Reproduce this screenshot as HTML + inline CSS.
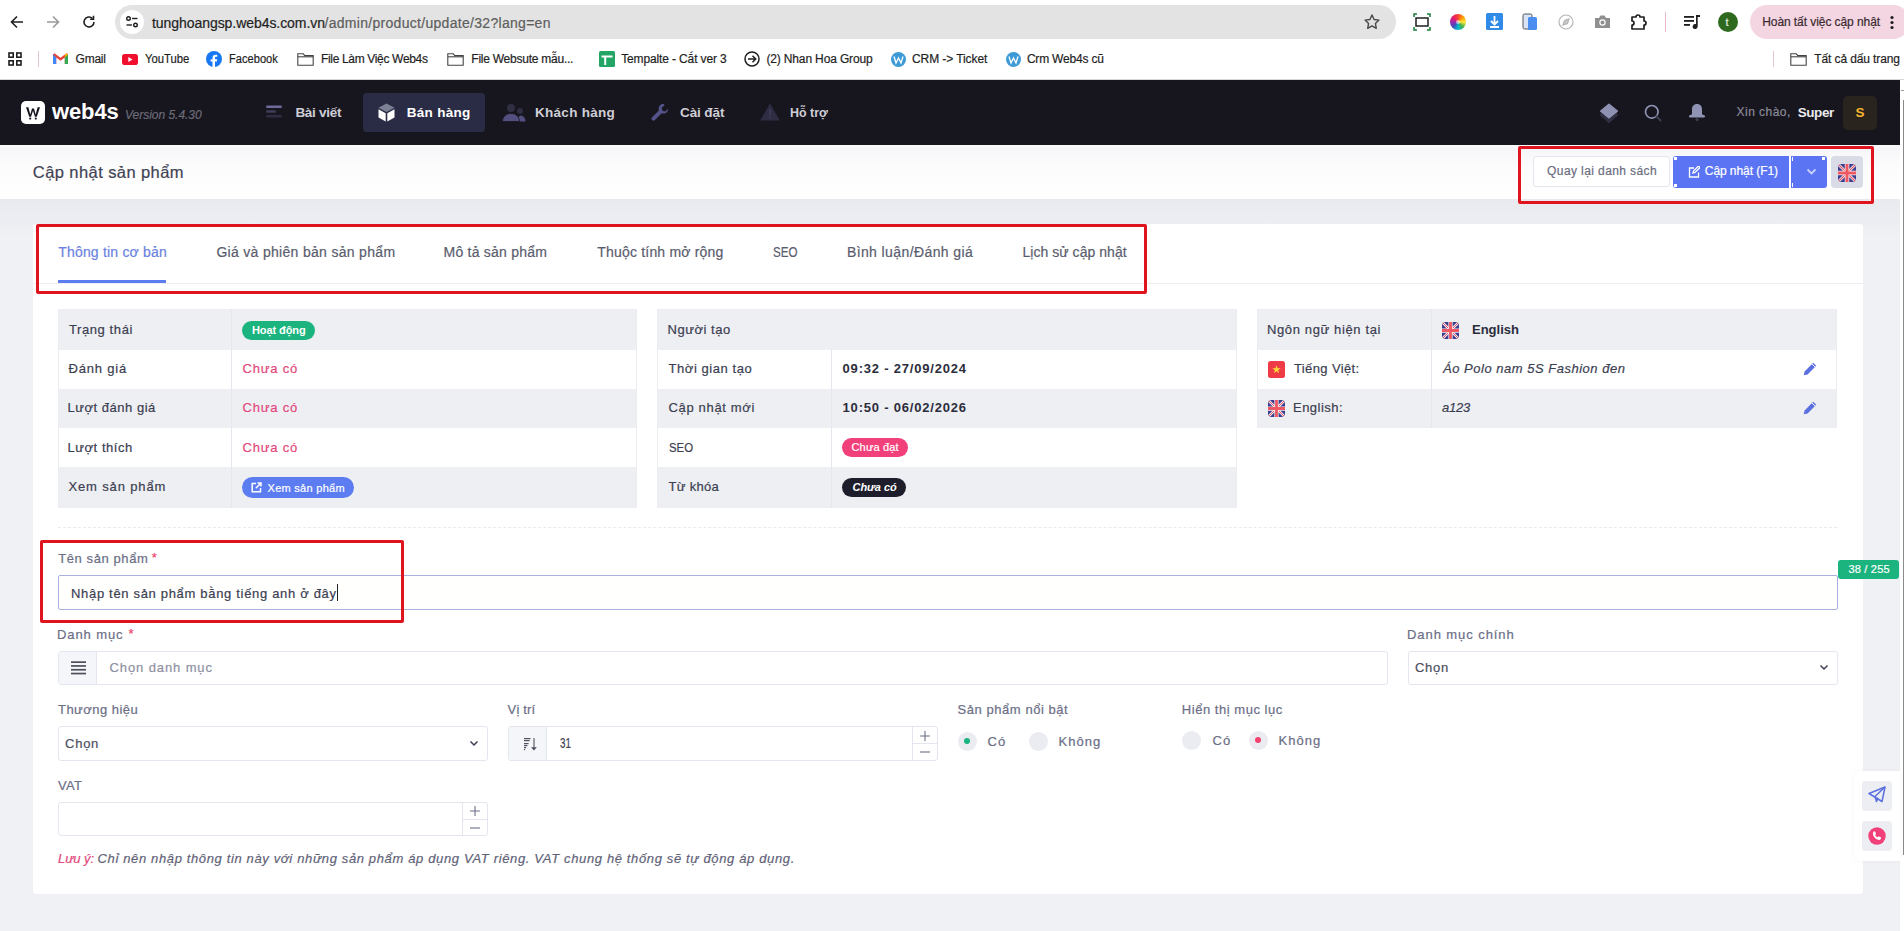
<!DOCTYPE html>
<html><head><meta charset="utf-8"><style>
html,body{margin:0;padding:0;width:1904px;height:931px;overflow:hidden;background:#f0f1f5;font-family:"Liberation Sans",sans-serif;}
body>div,body>span,body>svg{position:absolute;box-sizing:border-box;}
.t{white-space:nowrap;line-height:1;}
</style></head><body>
<div style="left:0px;top:0px;width:1904px;height:80px;background:#ffffff;"></div>
<div style="left:0px;top:79px;width:1904px;height:1px;background:#d6d6d6;"></div>
<div style="left:115px;top:5px;width:1281px;height:34px;background:#e3e3e3;border-radius:17px;"></div>
<div style="left:120px;top:10px;width:24px;height:24px;background:#ffffff;border-radius:12px;"></div>
<svg style="left:124px;top:14px" width="16" height="16" viewBox="0 0 16 16" fill="none" stroke="#1f1f1f" stroke-width="1.4"><circle cx="4.5" cy="4.5" r="1.8"/><path d="M8 4.5h5.5"/><circle cx="11.5" cy="11" r="1.8"/><path d="M2.5 11H8"/></svg>
<svg style="left:9px;top:14px" width="16" height="16" viewBox="0 0 16 16" fill="none" stroke="#1f1f1f" stroke-width="1.6"><path d="M14 8H3M8 2.5L2.5 8 8 13.5"/></svg>
<svg style="left:45px;top:14px" width="16" height="16" viewBox="0 0 16 16" fill="none" stroke="#9a9a9a" stroke-width="1.6"><path d="M2 8h11M8 2.5L13.5 8 8 13.5"/></svg>
<svg style="left:81px;top:14px" width="16" height="16" viewBox="0 0 16 16" fill="none" stroke="#1f1f1f" stroke-width="1.6"><path d="M13 8a5 5 0 1 1-1.6-3.7"/><path d="M12.5 1.8v3.4H9.1" /></svg>
<svg style="left:1363px;top:13px" width="18" height="18" viewBox="0 0 18 18" fill="none" stroke="#474747" stroke-width="1.4" stroke-linejoin="round"><path d="M9 2l2.1 4.5 4.9.6-3.6 3.3.9 4.9L9 12.9l-4.3 2.4.9-4.9L2 7.1l4.9-.6z"/></svg>
<svg style="left:1413px;top:13px" width="18" height="18" viewBox="0 0 18 18" fill="none" stroke="#1f1f1f" stroke-width="1.5"><rect x="3" y="5" width="12" height="8"/><path d="M1 4V1h3M14 1h3v3M17 14v3h-3M4 17H1v-3" stroke="#188038"/></svg>
<div style="left:1450px;top:14px;width:16px;height:16px;background:conic-gradient(#f44336,#ff9800,#ffeb3b,#4caf50,#00bcd4,#3f51b5,#9c27b0,#e91e63,#f44336);border-radius:50%;"></div>
<div style="left:1456px;top:20px;width:4px;height:4px;background:#ffffff;border-radius:50%;opacity:.6;"></div>
<svg style="left:1486px;top:13px" width="17" height="17" viewBox="0 0 17 17"><rect width="17" height="17" rx="1.5" fill="#2f8ae8"/><path d="M8.5 3v8M5 8l3.5 3.5L12 8M4 14h9" stroke="#fff" stroke-width="1.8" fill="none"/></svg>
<svg style="left:1522px;top:12px" width="16" height="19" viewBox="0 0 16 19"><rect x="1" y="2" width="9" height="15" rx="1.5" fill="#d8e4f6" stroke="#555" stroke-width="1"/><rect x="6" y="5" width="9" height="13" rx="1.5" fill="#4b8cf0"/></svg>
<svg style="left:1558px;top:14px" width="16" height="16" viewBox="0 0 16 16" fill="none" stroke="#b5b5b5" stroke-width="1.2"><circle cx="8" cy="8" r="7"/><path d="M5 11l1.5-4.5L11 5 9.5 9.5z" fill="#c8c8c8"/></svg>
<svg style="left:1594px;top:14px" width="17" height="15" viewBox="0 0 17 15"><path d="M1 4h4l1.5-2.5h4L12 4h4v10H1z" fill="#8f8f8f"/><circle cx="8.5" cy="8.5" r="3.2" fill="#fff"/><circle cx="8.5" cy="8.5" r="2" fill="#8f8f8f"/></svg>
<svg style="left:1630px;top:12px" width="18" height="19" viewBox="0 0 18 19" fill="none" stroke="#1f1f1f" stroke-width="1.7" stroke-linejoin="round"><path d="M2 5h4a2 2 0 0 1 4 0h4v4a2 2 0 0 1 0 4v4H2v-4a2 2 0 0 0 0-4z"/></svg>
<div style="left:1665px;top:12px;width:1px;height:20px;background:#e9b9c4;"></div>
<svg style="left:1683px;top:14px" width="18" height="16" viewBox="0 0 18 16" fill="#1f1f1f"><rect x="1" y="2" width="10" height="1.8"/><rect x="1" y="6" width="10" height="1.8"/><rect x="1" y="10" width="6" height="1.8"/><path d="M13 1h4v2h-2.3v9.5a2.5 2.5 0 1 1-1.7-2.4z"/></svg>
<div style="left:1718px;top:12px;width:20px;height:20px;background:#2d6a1e;border-radius:50%;"></div>
<div style="left:1750px;top:5px;width:160px;height:34px;background:#f4d6e2;border-radius:17px;"></div>
<svg style="left:1889px;top:15px" width="6" height="16" viewBox="0 0 6 16" fill="#1f1f1f"><circle cx="3" cy="2.5" r="1.6"/><circle cx="3" cy="7.5" r="1.6"/><circle cx="3" cy="12.5" r="1.6"/></svg>
<svg style="left:8px;top:52px" width="14" height="14" viewBox="0 0 14 14" fill="none" stroke="#1f1f1f" stroke-width="1.6"><rect x="1" y="1" width="4.2" height="4.2"/><rect x="8.8" y="1" width="4.2" height="4.2"/><rect x="1" y="8.8" width="4.2" height="4.2"/><rect x="8.8" y="8.8" width="4.2" height="4.2"/></svg>
<div style="left:38px;top:51px;width:1px;height:16px;background:#e5c8cf;"></div>
<svg style="left:53px;top:53px" width="15" height="11" viewBox="0 0 15 11"><path d="M0 1.2V11h3.2V4.5L7.5 7.8 11.8 4.5V11H15V1.2L13.6.2 7.5 4.8 1.4.2z" fill="#ea4335"/><path d="M0 1.2V11h3.2V4.5z" fill="#4285f4"/><path d="M11.8 4.5V11H15V1.2z" fill="#34a853"/><path d="M13.6.2L15 1.2 11.8 4.5V2z" fill="#fbbc04"/></svg>
<svg style="left:122px;top:54px" width="16" height="11" viewBox="0 0 16 11"><rect width="16" height="11" rx="2.8" fill="#f00f2c"/><path d="M6.3 3v5l4.2-2.5z" fill="#fff"/></svg>
<svg style="left:206px;top:51px" width="16" height="16" viewBox="0 0 16 16"><circle cx="8" cy="8" r="8" fill="#1877f2"/><path d="M9 16v-5.5h1.9l.3-2.2H9V6.9c0-.6.2-1.1 1.1-1.1h1.2V3.9c-.2 0-1-.1-1.8-.1-1.8 0-3 1.1-3 3.1v1.5H4.6v2.2h1.9V16z" fill="#fff"/></svg>
<svg style="left:297px;top:53px" width="17" height="13" viewBox="0 0 17 13" fill="none" stroke="#444" stroke-width="1.1"><path d="M.8.8h5.5l1.5 1.8h8.4v9.6H.8z"/><path d="M.8 3.8h15.4"/></svg>
<svg style="left:447px;top:53px" width="17" height="13" viewBox="0 0 17 13" fill="none" stroke="#444" stroke-width="1.1"><path d="M.8.8h5.5l1.5 1.8h8.4v9.6H.8z"/><path d="M.8 3.8h15.4"/></svg>
<svg style="left:599px;top:51px" width="16" height="16" viewBox="0 0 16 16"><rect width="16" height="16" rx="1.5" fill="#23a566"/><path d="M2.5 4.5h11v2H7.2V14H5.2V6.5H2.5z" fill="#fff"/></svg>
<svg style="left:744px;top:51px" width="16" height="16" viewBox="0 0 16 16" fill="none" stroke="#1f1f1f" stroke-width="1.5"><circle cx="8" cy="8" r="7"/><path d="M4 8h7.5M8.5 4.8L11.7 8 8.5 11.2"/></svg>
<svg style="left:891px;top:52px" width="15" height="15" viewBox="0 0 15 15"><circle cx="7.5" cy="7.5" r="7.5" fill="#3d9ad6"/><path d="M3 4.5l2 6.5 2.5-5 2.5 5 2-6.5" stroke="#fff" stroke-width="1.3" fill="none"/></svg>
<svg style="left:1006px;top:52px" width="15" height="15" viewBox="0 0 15 15"><circle cx="7.5" cy="7.5" r="7.5" fill="#3d9ad6"/><path d="M3 4.5l2 6.5 2.5-5 2.5 5 2-6.5" stroke="#fff" stroke-width="1.3" fill="none"/></svg>
<div style="left:1773px;top:51px;width:1px;height:16px;background:#e5c8cf;"></div>
<svg style="left:1790px;top:53px" width="17" height="13" viewBox="0 0 17 13" fill="none" stroke="#444" stroke-width="1.1"><path d="M.8.8h5.5l1.5 1.8h8.4v9.6H.8z"/><path d="M.8 3.8h15.4"/></svg>
<div style="left:1900px;top:80px;width:4px;height:851px;background:#ffffff;"></div>
<div style="left:1903px;top:100px;width:1px;height:755px;background:#8a8a8a;"></div>
<div style="left:1901px;top:90px;width:3px;height:1px;background:#9a9a9a;"></div>
<div style="left:0px;top:80px;width:1900px;height:65px;background:#17161e;"></div>
<div style="left:21px;top:101px;width:24px;height:23px;background:#ffffff;border-radius:5px;"></div>
<svg style="left:25px;top:105px" width="16" height="16" viewBox="0 0 16 16" fill="#17161e"><path d="M1 2.2h2.4l1.9 7.2 1.7-6h2l1.7 6 1.9-7.2H15l-3.2 9.5H9.9L8 5.8l-1.9 5.9H4.2z"/><circle cx="5.2" cy="13.6" r="1.1"/><circle cx="10.8" cy="13.6" r="1.1"/></svg>
<div style="left:363px;top:93px;width:122px;height:39px;background:#2a2c46;border-radius:4px;"></div>
<svg style="left:266px;top:105px" width="17" height="13" viewBox="0 0 17 13"><rect x="0" y="0.5" width="16" height="2.6" rx="1.3" fill="#6e6a9a"/><rect x="0" y="5.2" width="10" height="2.6" rx="1.3" fill="#3e3c5a"/><rect x="0" y="10" width="16" height="2.6" rx="1.3" fill="#2e2d44"/></svg>
<svg style="left:378px;top:103px" width="17" height="19" viewBox="0 0 17 19"><path d="M8.5 0.5L16.5 4.7 8.5 9 0.5 4.7z" fill="#7d8196"/><path d="M0.5 6.2L7.7 10.2V18.5L0.5 14.5z" fill="#ffffff"/><path d="M16.5 6.2L9.3 10.2V18.5L16.5 14.5z" fill="#ffffff"/></svg>
<svg style="left:502px;top:103px" width="24" height="19" viewBox="0 0 24 19"><circle cx="9" cy="5" r="4" fill="#2f2e42"/><circle cx="18" cy="8" r="3" fill="#2f2e42"/><path d="M15.5 18.5c0-3 1.2-6 3.5-6s4.5 3 4.5 6z" fill="#524f80"/><path d="M0.5 18.5c0-5 3.8-8 8.5-8s8.5 3 8.5 8z" fill="#524f80" stroke="#17161e" stroke-width="0.8"/></svg>
<svg style="left:651px;top:103px" width="18" height="19" viewBox="0 0 18 19"><path d="M12.5 0.8a5 5 0 0 0-4.6 6.7L0.9 14.5a2 2 0 0 0 2.8 2.8l7-7a5 5 0 0 0 6.6-4.7l-3 3-2.8-.9-.9-2.8 3-3z" fill="#55528a"/></svg>
<svg style="left:760px;top:103px" width="20" height="18" viewBox="0 0 20 18"><path d="M10 0.5L19.8 17.5H0.2z" fill="#2e2d44"/><rect x="9.2" y="6" width="1.6" height="6" fill="#3e3c5c"/><rect x="9.2" y="13.5" width="1.6" height="1.6" fill="#3e3c5c"/></svg>
<svg style="left:1599px;top:102px" width="20" height="22" viewBox="0 0 20 22"><path d="M2.6 11.5L10 18 17.4 11.5 19 12.8 10 20.8 1 12.8z" fill="#2f3042" stroke="#2f3042" stroke-width="1" stroke-linejoin="round"/><path d="M10 2.3L18.2 9.2 10 16 1.8 9.2z" fill="#8f91b2" stroke="#8f91b2" stroke-width="1.6" stroke-linejoin="round"/></svg>
<svg style="left:1642px;top:102px" width="22" height="22" viewBox="0 0 22 22" fill="none"><circle cx="9.8" cy="9.8" r="6.3" stroke="#9193b5" stroke-width="1.7"/><path d="M14.5 14.5l4 4" stroke="#3d3e52" stroke-width="2" stroke-linecap="round"/></svg>
<svg style="left:1688px;top:102px" width="18" height="20" viewBox="0 0 18 20"><path d="M9 2c3.3 0 5 2.4 5 5.4V12.3l2.6 1.2a1 1 0 0 1-.4 1.9H1.8a1 1 0 0 1-.4-1.9L4 12.3V7.4C4 4.4 5.7 2 9 2z" fill="#9193b5"/><circle cx="9" cy="17.6" r="1.6" fill="#3d3e52"/></svg>
<div style="left:1843px;top:96px;width:34px;height:34px;background:#2a241f;border-radius:5px;"></div>
<div style="left:0px;top:145px;width:1900px;height:54px;background:linear-gradient(#fafafb 0px,#f6f6f8 3px,#fcfcfd 22px,#ffffff 54px);"></div>
<div style="left:1533px;top:156px;width:137px;height:31px;background:#ffffff;border:1px solid #e4e6ef;border-radius:3px;"></div>
<div style="left:1673px;top:156px;width:116px;height:31.5px;background:#5a74f3;border-radius:3px 0 0 3px;"></div>
<svg style="left:1688px;top:166px" width="12" height="12" viewBox="0 0 12 12" fill="none" stroke="#fff" stroke-width="1.3"><path d="M6 2H1.5v9h9V6.5"/><path d="M5 7l.5-2 5-5 1.5 1.5-5 5z"/></svg>
<div style="left:1791px;top:156px;width:36px;height:31.5px;background:#5a74f3;border-radius:0 3px 3px 0;"></div>
<svg style="left:1806px;top:168px" width="10" height="7" viewBox="0 0 10 7" fill="none" stroke="#c9d0fb" stroke-width="1.8"><path d="M1.5 1.5l4 4 4-4"/></svg>
<div style="left:1674px;top:157px;width:3px;height:3px;background:#ffffff;"></div>
<div style="left:1674px;top:184px;width:3px;height:3px;background:#ffffff;"></div>
<div style="left:1822px;top:157px;width:3px;height:3px;background:#ffffff;"></div>
<div style="left:1791.5px;top:157px;width:1px;height:4px;background:#ffffff;"></div>
<div style="left:1791.5px;top:183px;width:1px;height:4px;background:#ffffff;"></div>
<div style="left:1831px;top:156px;width:32px;height:31.5px;background:#d9dce7;border-radius:4px;"></div>
<svg style="left:1838px;top:164px" width="18" height="18" viewBox="0 0 60 60"><defs><clipPath id="cla"><rect width="60" height="60" rx="12"/></clipPath></defs><g clip-path="url(#cla)"><rect width="60" height="60" fill="#3b3d8e"/><path d="M0 0L60 60M60 0L0 60" stroke="#f4e8ee" stroke-width="9"/><path d="M0 0L60 60M60 0L0 60" stroke="#e9505e" stroke-width="3.5"/><path d="M30 0V60M0 30H60" stroke="#f8eef2" stroke-width="15"/><path d="M30 0V60M0 30H60" stroke="#ee5863" stroke-width="10"/></g></svg>
<div style="left:0px;top:199px;width:1900px;height:40px;background:linear-gradient(#e9eaef,#f0f1f5);"></div>
<div style="left:33px;top:224px;width:1830px;height:670px;background:#ffffff;border-radius:3px;"></div>
<div style="left:33px;top:283px;width:1830px;height:1px;background:#ebedf3;"></div>
<div style="left:58px;top:280px;width:108px;height:3px;background:#5c7cf2;"></div>
<div style="left:58px;top:309px;width:578.5px;height:40.5px;background:#eeeff3;"></div>
<div style="left:58px;top:349.5px;width:578.5px;height:39.0px;background:#ffffff;"></div>
<div style="left:58px;top:388.5px;width:578.5px;height:39.5px;background:#eeeff3;"></div>
<div style="left:58px;top:428px;width:578.5px;height:39px;background:#ffffff;"></div>
<div style="left:58px;top:467px;width:578.5px;height:40.5px;background:#eeeff3;"></div>
<div style="left:58px;top:309px;width:578.5px;height:198.5px;background:transparent;border:1px solid #ecedf2;border-radius:2px;"></div>
<div style="left:231px;top:309px;width:1px;height:198.5px;background:#e6e7ee;"></div>
<div style="left:657px;top:309px;width:579.5px;height:40.5px;background:#eeeff3;"></div>
<div style="left:657px;top:349.5px;width:579.5px;height:39.0px;background:#ffffff;"></div>
<div style="left:657px;top:388.5px;width:579.5px;height:39.5px;background:#eeeff3;"></div>
<div style="left:657px;top:428px;width:579.5px;height:39px;background:#ffffff;"></div>
<div style="left:657px;top:467px;width:579.5px;height:40.5px;background:#eeeff3;"></div>
<div style="left:657px;top:309px;width:579.5px;height:198.5px;background:transparent;border:1px solid #ecedf2;border-radius:2px;"></div>
<div style="left:831px;top:349.5px;width:1px;height:158.0px;background:#e6e7ee;"></div>
<div style="left:1257px;top:309px;width:579.5px;height:40.5px;background:#eeeff3;"></div>
<div style="left:1257px;top:349.5px;width:579.5px;height:39.0px;background:#ffffff;"></div>
<div style="left:1257px;top:388.5px;width:579.5px;height:39.5px;background:#eeeff3;"></div>
<div style="left:1257px;top:309px;width:579.5px;height:119px;background:transparent;border:1px solid #ecedf2;border-radius:2px;"></div>
<div style="left:1431px;top:309px;width:1px;height:119px;background:#e6e7ee;"></div>
<div style="left:242px;top:321px;width:73px;height:19px;background:#1bb47e;border-radius:10px;"></div>
<div style="left:242px;top:477px;width:112px;height:21px;background:#5c7cf2;border-radius:11px;"></div>
<svg style="left:251px;top:482px" width="11" height="11" viewBox="0 0 11 11" fill="none" stroke="#fff" stroke-width="1.5"><path d="M5 1.5H1.2v8.3h8.3V6"/><path d="M6.5 1h3.5v3.5M10 1L4.8 6.2"/></svg>
<div style="left:842px;top:438px;width:66px;height:19px;background:#f2407a;border-radius:10px;"></div>
<div style="left:842px;top:478px;width:64px;height:19px;background:#1e1d2b;border-radius:10px;"></div>
<svg style="left:1442px;top:321.5px" width="17" height="17" viewBox="0 0 60 60"><defs><clipPath id="clb"><rect width="60" height="60" rx="12"/></clipPath></defs><g clip-path="url(#clb)"><rect width="60" height="60" fill="#3b3d8e"/><path d="M0 0L60 60M60 0L0 60" stroke="#f4e8ee" stroke-width="9"/><path d="M0 0L60 60M60 0L0 60" stroke="#e9505e" stroke-width="3.5"/><path d="M30 0V60M0 30H60" stroke="#f8eef2" stroke-width="15"/><path d="M30 0V60M0 30H60" stroke="#ee5863" stroke-width="10"/></g></svg>
<svg style="left:1268px;top:361px" width="17" height="17" viewBox="0 0 17 17"><rect width="17" height="17" rx="2.5" fill="#ee3b45"/><path d="M8.5 4.2l1.05 3.1h3.2l-2.6 1.9 1 3.1-2.65-1.95-2.65 1.95 1-3.1-2.6-1.9h3.2z" fill="#ffd83a"/></svg>
<svg style="left:1268px;top:400px" width="17" height="17" viewBox="0 0 60 60"><defs><clipPath id="clc"><rect width="60" height="60" rx="12"/></clipPath></defs><g clip-path="url(#clc)"><rect width="60" height="60" fill="#3b3d8e"/><path d="M0 0L60 60M60 0L0 60" stroke="#f4e8ee" stroke-width="9"/><path d="M0 0L60 60M60 0L0 60" stroke="#e9505e" stroke-width="3.5"/><path d="M30 0V60M0 30H60" stroke="#f8eef2" stroke-width="15"/><path d="M30 0V60M0 30H60" stroke="#ee5863" stroke-width="10"/></g></svg>
<svg style="left:1803px;top:361.5px" width="14" height="14" viewBox="0 0 14 14"><path d="M10.2.8l3 3-8.6 8.6-3.9.9.9-3.9z" fill="#5c6fe0"/><path d="M9 2l3 3" stroke="#fff" stroke-width="1"/></svg>
<svg style="left:1803px;top:400.5px" width="14" height="14" viewBox="0 0 14 14"><path d="M10.2.8l3 3-8.6 8.6-3.9.9.9-3.9z" fill="#5c6fe0"/><path d="M9 2l3 3" stroke="#fff" stroke-width="1"/></svg>
<div style="left:58px;top:527px;width:1779px;height:1px;background:transparent;border-top:1px dashed #e8eaf0;"></div>
<div style="left:58px;top:575px;width:1780px;height:35px;background:#fffffe;border:1px solid #abb1df;border-radius:2px;"></div>
<div style="left:336.5px;top:584px;width:1px;height:17px;background:#222;"></div>
<div style="left:1838px;top:560px;width:61px;height:19px;background:#1bb47e;border-radius:3px;"></div>
<div style="left:58px;top:651px;width:1330px;height:34px;background:#ffffff;border:1px solid #e4e6ef;border-radius:3px;"></div>
<div style="left:59px;top:652px;width:38px;height:32px;background:#f5f6f9;border-right:1px solid #e4e6ef;"></div>
<svg style="left:71px;top:661px" width="15" height="14" viewBox="0 0 15 14" fill="#4d4f5c"><rect y="0.3" width="15" height="1.7"/><rect y="4.1" width="15" height="1.7"/><rect y="7.9" width="15" height="1.7"/><rect y="11.7" width="15" height="1.7"/></svg>
<div style="left:1408px;top:651px;width:430px;height:34px;background:#ffffff;border:1px solid #e4e6ef;border-radius:3px;"></div>
<svg style="left:1819px;top:664px" width="10" height="7" viewBox="0 0 10 7" fill="none" stroke="#3b3e51" stroke-width="1.5"><path d="M1.5 1.5L5 5l3.5-3.5"/></svg>
<div style="left:58px;top:726px;width:430px;height:35px;background:#ffffff;border:1px solid #e4e6ef;border-radius:3px;"></div>
<svg style="left:469px;top:739.5px" width="10" height="7" viewBox="0 0 10 7" fill="none" stroke="#3b3e51" stroke-width="1.5"><path d="M1.5 1.5L5 5l3.5-3.5"/></svg>
<div style="left:508px;top:726px;width:430px;height:35px;background:#ffffff;border:1px solid #e4e6ef;border-radius:3px;"></div>
<div style="left:509px;top:727px;width:38px;height:33px;background:#f5f6f9;border-right:1px solid #e4e6ef;"></div>
<svg style="left:523px;top:738px" width="15" height="14" viewBox="0 0 15 14" fill="#4e5062"><rect x="1" y="0" width="6.5" height="1.2"/><rect x="1" y="2" width="5.6" height="1.2"/><rect x="1" y="5" width="4.6" height="1.2"/><rect x="1" y="7" width="3.4" height="1.2"/><rect x="1" y="9" width="2.1" height="1.2"/><rect x="1" y="11" width="1.1" height="1.2"/><rect x="10.3" y="0" width="1.4" height="10" fill="#747586"/><path d="M8 9.2h5.9L10.95 12.6z"/></svg>
<div style="left:912px;top:727px;width:1px;height:33px;background:#e4e6ef;"></div>
<div style="left:913px;top:743px;width:24px;height:1px;background:#e4e6ef;"></div>
<svg style="left:919.5px;top:730.5px" width="10" height="10" viewBox="0 0 10 10" stroke="#6b6e86" stroke-width="1.1"><path d="M5 0v10M0 5h10"/></svg>
<svg style="left:919.5px;top:751px" width="10" height="2" viewBox="0 0 10 2" stroke="#6b6e86" stroke-width="1.1"><path d="M0 1h10"/></svg>
<div style="left:957.5px;top:731.5px;width:19px;height:19px;background:#ebecf1;border-radius:50%;"></div>
<div style="left:964px;top:738px;width:6px;height:6px;background:#1bb47e;border-radius:50%;"></div>
<div style="left:1028.5px;top:731.5px;width:19px;height:19px;background:#ebecf1;border-radius:50%;"></div>
<div style="left:1182.0px;top:730.5px;width:19px;height:19px;background:#ebecf1;border-radius:50%;"></div>
<div style="left:1248.5px;top:730.5px;width:19px;height:19px;background:#ebecf1;border-radius:50%;"></div>
<div style="left:1255px;top:737px;width:6px;height:6px;background:#f1416c;border-radius:50%;"></div>
<div style="left:58px;top:802px;width:430px;height:34px;background:#ffffff;border:1px solid #e4e6ef;border-radius:3px;"></div>
<div style="left:462px;top:803px;width:1px;height:32px;background:#e4e6ef;"></div>
<div style="left:463px;top:819px;width:24px;height:1px;background:#e4e6ef;"></div>
<svg style="left:469.5px;top:806px" width="10" height="10" viewBox="0 0 10 10" stroke="#6b6e86" stroke-width="1.1"><path d="M5 0v10M0 5h10"/></svg>
<svg style="left:469.5px;top:827px" width="10" height="2" viewBox="0 0 10 2" stroke="#6b6e86" stroke-width="1.1"><path d="M0 1h10"/></svg>
<div style="left:1854px;top:771px;width:46px;height:90px;background:#ffffff;border-radius:6px 0 0 6px;box-shadow:0 0 6px rgba(0,0,0,.04);"></div>
<div style="left:1862px;top:781px;width:30px;height:30px;background:#eceef3;border-radius:4px;"></div>
<svg style="left:1868px;top:786px" width="18" height="17" viewBox="0 0 18 17" fill="none" stroke="#5c6fe0" stroke-width="1.5" stroke-linejoin="round"><path d="M1 7.5L17 1 14 15.5z"/><path d="M17 1L7 10.5 8.5 15.5 10 11.8"/></svg>
<div style="left:1862px;top:821px;width:30px;height:30px;background:#eceef3;border-radius:4px;"></div>
<svg style="left:1868px;top:827px" width="18" height="18" viewBox="0 0 18 18"><circle cx="9" cy="9" r="8.7" fill="#f1407a"/><path d="M6 4.3c.4-.2.9 0 1.1.4l.8 1.6c.2.4.1.8-.2 1.1l-.6.5c.5 1 1.3 1.9 2.3 2.4l.5-.6c.3-.3.7-.4 1.1-.2l1.6.8c.4.2.6.7.4 1.1-.5 1.2-1.6 1.7-2.7 1.4C7.9 12.3 5.7 10.1 5.1 7.7 4.8 6.3 5 5 6 4.3z" fill="#fff"/></svg>
<div style="left:1518px;top:146px;width:356px;height:58px;background:transparent;border:3px solid #e0141e;border-radius:2px;"></div>
<div style="left:36px;top:224px;width:1111px;height:70px;background:transparent;border:3px solid #e0141e;border-radius:2px;"></div>
<div style="left:40px;top:540px;width:364px;height:83px;background:transparent;border:3px solid #e0141e;border-radius:2px;"></div>
<span class="t" id="t0" style="left:152.00px;top:15.55px;font-size:14px;color:#1f1f1f;-webkit-text-stroke:0.2px;letter-spacing:-0.059px;">tunghoangsp.web4s.com.vn</span>
<span class="t" id="t1" style="left:324.50px;top:15.55px;font-size:14px;color:#5e5e5e;-webkit-text-stroke:0.2px;letter-spacing:0.297px;">/admin/product/update/32?lang=en</span>
<span class="t" id="t2" style="left:1725.50px;top:16.69px;font-size:11px;color:#e8f0e0;-webkit-text-stroke:0.2px;">t</span>
<span class="t" id="t3" style="left:1762.20px;top:16.04px;font-size:12px;color:#3a2a30;-webkit-text-stroke:0.2px;letter-spacing:-0.070px;">Hoàn tất việc cập nhật</span>
<span class="t" id="t4" style="left:75.60px;top:52.54px;font-size:12px;color:#1f1f1f;-webkit-text-stroke:0.2px;letter-spacing:-0.267px;">Gmail</span>
<span class="t" id="t5" style="left:144.50px;top:52.54px;font-size:12px;color:#1f1f1f;-webkit-text-stroke:0.2px;transform:scaleX(0.941);transform-origin:0.00px 0;">YouTube</span>
<span class="t" id="t6" style="left:228.60px;top:52.54px;font-size:12px;color:#1f1f1f;-webkit-text-stroke:0.2px;transform:scaleX(0.926);transform-origin:0.00px 0;">Facebook</span>
<span class="t" id="t7" style="left:321.00px;top:52.54px;font-size:12px;color:#1f1f1f;-webkit-text-stroke:0.2px;letter-spacing:-0.336px;">File Làm Việc Web4s</span>
<span class="t" id="t8" style="left:471.30px;top:52.54px;font-size:12px;color:#1f1f1f;-webkit-text-stroke:0.2px;letter-spacing:-0.242px;">File Websute mẫu...</span>
<span class="t" id="t9" style="left:621.20px;top:52.54px;font-size:12px;color:#1f1f1f;-webkit-text-stroke:0.2px;letter-spacing:-0.135px;">Tempalte - Cắt ver 3</span>
<span class="t" id="t10" style="left:766.40px;top:52.54px;font-size:12px;color:#1f1f1f;-webkit-text-stroke:0.2px;letter-spacing:-0.144px;">(2) Nhan Hoa Group</span>
<span class="t" id="t11" style="left:912.00px;top:52.54px;font-size:12px;color:#1f1f1f;-webkit-text-stroke:0.2px;letter-spacing:-0.085px;">CRM -&gt; Ticket</span>
<span class="t" id="t12" style="left:1026.90px;top:52.54px;font-size:12px;color:#1f1f1f;-webkit-text-stroke:0.2px;letter-spacing:-0.196px;">Crm Web4s cũ</span>
<span class="t" id="t13" style="left:1814.30px;top:52.54px;font-size:12px;color:#1f1f1f;-webkit-text-stroke:0.2px;letter-spacing:-0.114px;">Tất cả dấu trang</span>
<span class="t" id="t14" style="left:52.00px;top:101.38px;font-size:22px;color:#ffffff;font-weight:700;letter-spacing:-0.130px;">web4s</span>
<span class="t" id="t15" style="left:125.00px;top:109.34px;font-size:12px;color:#6c6b78;-webkit-text-stroke:0.2px;font-style:italic;letter-spacing:-0.020px;">Version 5.4.30</span>
<span class="t" id="t16" style="left:295.40px;top:105.57px;font-size:13.5px;color:#cfced6;font-weight:700;letter-spacing:-0.275px;">Bài viết</span>
<span class="t" id="t17" style="left:406.80px;top:105.57px;font-size:13.5px;color:#ffffff;font-weight:700;letter-spacing:0.278px;">Bán hàng</span>
<span class="t" id="t18" style="left:535.00px;top:105.57px;font-size:13.5px;color:#cfced6;font-weight:700;letter-spacing:0.288px;">Khách hàng</span>
<span class="t" id="t19" style="left:680.00px;top:105.57px;font-size:13.5px;color:#cfced6;font-weight:700;letter-spacing:-0.102px;">Cài đặt</span>
<span class="t" id="t20" style="left:789.80px;top:105.57px;font-size:13.5px;color:#cfced6;font-weight:700;transform:scaleX(0.921);transform-origin:0.00px 0;">Hỗ trợ</span>
<span class="t" id="t21" style="left:1736.60px;top:106.04px;font-size:12px;color:#8b8a98;-webkit-text-stroke:0.2px;letter-spacing:0.463px;">Xin chào,</span>
<span class="t" id="t22" style="left:1797.70px;top:105.87px;font-size:13.5px;color:#e9e9ef;font-weight:700;letter-spacing:-0.426px;">Super</span>
<span class="t" id="t23" style="left:1855.40px;top:105.87px;font-size:13.5px;color:#f5b62a;font-weight:700;">S</span>
<span class="t" id="t24" style="left:32.80px;top:163.63px;font-size:16.5px;color:#3f4254;-webkit-text-stroke:0.2px;letter-spacing:0.421px;">Cập nhật sản phẩm</span>
<span class="t" id="t25" style="left:1547.10px;top:165.04px;font-size:12px;color:#6a6d7e;-webkit-text-stroke:0.2px;letter-spacing:0.402px;">Quay lại danh sách</span>
<span class="t" id="t26" style="left:1704.80px;top:165.04px;font-size:12px;color:#ffffff;-webkit-text-stroke:0.2px;letter-spacing:-0.070px;">Cập nhật (F1)</span>
<span class="t" id="t27" style="left:58.20px;top:244.75px;font-size:14px;color:#6a82e0;-webkit-text-stroke:0.2px;letter-spacing:0.193px;">Thông tin cơ bản</span>
<span class="t" id="t28" style="left:216.40px;top:244.75px;font-size:14px;color:#5a5d6e;-webkit-text-stroke:0.2px;letter-spacing:0.310px;">Giá và phiên bản sản phẩm</span>
<span class="t" id="t29" style="left:443.50px;top:244.75px;font-size:14px;color:#5a5d6e;-webkit-text-stroke:0.2px;letter-spacing:0.237px;">Mô tả sản phẩm</span>
<span class="t" id="t30" style="left:597.30px;top:244.75px;font-size:14px;color:#5a5d6e;-webkit-text-stroke:0.2px;letter-spacing:0.188px;">Thuộc tính mở rộng</span>
<span class="t" id="t31" style="left:772.90px;top:244.75px;font-size:14px;color:#5a5d6e;-webkit-text-stroke:0.2px;transform:scaleX(0.829);transform-origin:0.00px 0;">SEO</span>
<span class="t" id="t32" style="left:846.90px;top:244.75px;font-size:14px;color:#5a5d6e;-webkit-text-stroke:0.2px;letter-spacing:0.400px;">Bình luận/Đánh giá</span>
<span class="t" id="t33" style="left:1022.40px;top:244.75px;font-size:14px;color:#5a5d6e;-webkit-text-stroke:0.2px;letter-spacing:0.050px;">Lịch sử cập nhật</span>
<span class="t" id="t34" style="left:68.90px;top:323.00px;font-size:13px;color:#3b3e51;-webkit-text-stroke:0.2px;letter-spacing:0.604px;">Trạng thái</span>
<span class="t" id="t35" style="left:68.50px;top:362.00px;font-size:13px;color:#3b3e51;-webkit-text-stroke:0.2px;letter-spacing:0.813px;">Đánh giá</span>
<span class="t" id="t36" style="left:67.50px;top:401.30px;font-size:13px;color:#3b3e51;-webkit-text-stroke:0.2px;letter-spacing:0.522px;">Lượt đánh giá</span>
<span class="t" id="t37" style="left:67.50px;top:440.60px;font-size:13px;color:#3b3e51;-webkit-text-stroke:0.2px;letter-spacing:0.541px;">Lượt thích</span>
<span class="t" id="t38" style="left:68.50px;top:480.20px;font-size:13px;color:#3b3e51;-webkit-text-stroke:0.2px;letter-spacing:0.854px;">Xem sản phẩm</span>
<span class="t" id="t39" style="left:252.00px;top:324.69px;font-size:11px;color:#ffffff;font-weight:700;letter-spacing:-0.082px;">Hoạt động</span>
<span class="t" id="t40" style="left:242.50px;top:362.00px;font-size:13px;color:#e2487c;-webkit-text-stroke:0.2px;letter-spacing:0.806px;">Chưa có</span>
<span class="t" id="t41" style="left:242.50px;top:401.30px;font-size:13px;color:#e2487c;-webkit-text-stroke:0.2px;letter-spacing:0.806px;">Chưa có</span>
<span class="t" id="t42" style="left:242.50px;top:440.60px;font-size:13px;color:#e2487c;-webkit-text-stroke:0.2px;letter-spacing:0.806px;">Chưa có</span>
<span class="t" id="t43" style="left:267.50px;top:482.69px;font-size:11px;color:#ffffff;-webkit-text-stroke:0.2px;letter-spacing:0.289px;">Xem sản phẩm</span>
<span class="t" id="t44" style="left:667.50px;top:323.00px;font-size:13px;color:#3b3e51;-webkit-text-stroke:0.2px;letter-spacing:0.539px;">Người tạo</span>
<span class="t" id="t45" style="left:668.50px;top:362.00px;font-size:13px;color:#3b3e51;-webkit-text-stroke:0.2px;letter-spacing:0.564px;">Thời gian tạo</span>
<span class="t" id="t46" style="left:668.50px;top:401.30px;font-size:13px;color:#3b3e51;-webkit-text-stroke:0.2px;letter-spacing:0.661px;">Cập nhật mới</span>
<span class="t" id="t47" style="left:668.50px;top:440.60px;font-size:13px;color:#3b3e51;-webkit-text-stroke:0.2px;transform:scaleX(0.878);transform-origin:0.00px 0;">SEO</span>
<span class="t" id="t48" style="left:668.50px;top:480.20px;font-size:13px;color:#3b3e51;-webkit-text-stroke:0.2px;letter-spacing:0.297px;">Từ khóa</span>
<span class="t" id="t49" style="left:842.60px;top:362.00px;font-size:13px;color:#2b2d3c;font-weight:700;letter-spacing:0.792px;">09:32 - 27/09/2024</span>
<span class="t" id="t50" style="left:842.60px;top:401.30px;font-size:13px;color:#2b2d3c;font-weight:700;letter-spacing:0.798px;">10:50 - 06/02/2026</span>
<span class="t" id="t51" style="left:851.50px;top:442.19px;font-size:11px;color:#ffffff;-webkit-text-stroke:0.2px;letter-spacing:0.167px;">Chưa đạt</span>
<span class="t" id="t52" style="left:852.50px;top:482.19px;font-size:11px;color:#ffffff;font-weight:700;font-style:italic;letter-spacing:-0.051px;">Chưa có</span>
<span class="t" id="t53" style="left:1267.00px;top:323.00px;font-size:13px;color:#3b3e51;-webkit-text-stroke:0.2px;letter-spacing:0.625px;">Ngôn ngữ hiện tại</span>
<span class="t" id="t54" style="left:1472.00px;top:323.00px;font-size:13px;color:#2b2d3c;font-weight:700;letter-spacing:-0.001px;">English</span>
<span class="t" id="t55" style="left:1294.00px;top:362.00px;font-size:13px;color:#3b3e51;-webkit-text-stroke:0.2px;letter-spacing:0.379px;">Tiếng Việt:</span>
<span class="t" id="t56" style="left:1443.00px;top:362.00px;font-size:13px;color:#3b3e51;-webkit-text-stroke:0.2px;font-style:italic;letter-spacing:0.513px;">Áo Polo nam 5S Fashion đen</span>
<span class="t" id="t57" style="left:1293.00px;top:401.30px;font-size:13px;color:#3b3e51;-webkit-text-stroke:0.2px;letter-spacing:0.480px;">English:</span>
<span class="t" id="t58" style="left:1442.00px;top:401.30px;font-size:13px;color:#3b3e51;-webkit-text-stroke:0.2px;font-style:italic;letter-spacing:-0.230px;">a123</span>
<span class="t" id="t59" style="left:58.20px;top:552.10px;font-size:13px;color:#6b6e86;-webkit-text-stroke:0.2px;letter-spacing:0.593px;">Tên sản phẩm</span>
<span class="t" id="t60" style="left:151.70px;top:551.40px;font-size:13px;color:#f1416c;-webkit-text-stroke:0.2px;">*</span>
<span class="t" id="t61" style="left:71.00px;top:586.50px;font-size:13px;color:#3b3e51;-webkit-text-stroke:0.2px;letter-spacing:0.681px;">Nhập tên sản phẩm bằng tiếng anh ở đây</span>
<span class="t" id="t62" style="left:1848.50px;top:564.19px;font-size:11px;color:#ffffff;-webkit-text-stroke:0.2px;letter-spacing:0.194px;">38 / 255</span>
<span class="t" id="t63" style="left:57.00px;top:628.20px;font-size:13px;color:#6b6e86;-webkit-text-stroke:0.2px;letter-spacing:0.893px;">Danh mục</span>
<span class="t" id="t64" style="left:128.40px;top:627.30px;font-size:13px;color:#f1416c;-webkit-text-stroke:0.2px;">*</span>
<span class="t" id="t65" style="left:109.50px;top:661.00px;font-size:13px;color:#8e90a2;-webkit-text-stroke:0.2px;letter-spacing:0.893px;">Chọn danh mục</span>
<span class="t" id="t66" style="left:1407.00px;top:628.20px;font-size:13px;color:#6b6e86;-webkit-text-stroke:0.2px;letter-spacing:0.928px;">Danh mục chính</span>
<span class="t" id="t67" style="left:1415.00px;top:661.00px;font-size:13px;color:#4b4e5e;-webkit-text-stroke:0.2px;letter-spacing:0.717px;">Chọn</span>
<span class="t" id="t68" style="left:58.00px;top:703.00px;font-size:13px;color:#6b6e86;-webkit-text-stroke:0.2px;letter-spacing:0.468px;">Thương hiệu</span>
<span class="t" id="t69" style="left:65.10px;top:736.90px;font-size:13px;color:#4b4e5e;-webkit-text-stroke:0.2px;letter-spacing:0.717px;">Chọn</span>
<span class="t" id="t70" style="left:507.60px;top:703.00px;font-size:13px;color:#6b6e86;-webkit-text-stroke:0.2px;letter-spacing:0.178px;">Vị trí</span>
<span class="t" id="t71" style="left:559.80px;top:736.05px;font-size:14px;color:#3f4252;-webkit-text-stroke:0.2px;transform:scaleX(0.697);transform-origin:0.00px 0;">31</span>
<span class="t" id="t72" style="left:957.60px;top:703.00px;font-size:13px;color:#6b6e86;-webkit-text-stroke:0.2px;letter-spacing:0.547px;">Sản phẩm nổi bật</span>
<span class="t" id="t73" style="left:987.60px;top:734.50px;font-size:13px;color:#6b6e86;-webkit-text-stroke:0.2px;letter-spacing:1.112px;">Có</span>
<span class="t" id="t74" style="left:1058.60px;top:734.50px;font-size:13px;color:#6b6e86;-webkit-text-stroke:0.2px;letter-spacing:1.035px;">Không</span>
<span class="t" id="t75" style="left:1181.80px;top:703.00px;font-size:13px;color:#6b6e86;-webkit-text-stroke:0.2px;letter-spacing:0.535px;">Hiển thị mục lục</span>
<span class="t" id="t76" style="left:1212.50px;top:734.00px;font-size:13px;color:#6b6e86;-webkit-text-stroke:0.2px;letter-spacing:1.112px;">Có</span>
<span class="t" id="t77" style="left:1278.50px;top:734.00px;font-size:13px;color:#6b6e86;-webkit-text-stroke:0.2px;letter-spacing:1.035px;">Không</span>
<span class="t" id="t78" style="left:58.00px;top:779.00px;font-size:13px;color:#6b6e86;-webkit-text-stroke:0.2px;letter-spacing:0.294px;">VAT</span>
<span class="t" id="t79" style="left:58.00px;top:852.40px;font-size:13px;color:#e2487c;-webkit-text-stroke:0.2px;font-style:italic;letter-spacing:-0.062px;">Lưu ý:</span>
<span class="t" id="t80" style="left:97.50px;top:852.40px;font-size:13px;color:#5f6277;-webkit-text-stroke:0.2px;font-style:italic;letter-spacing:0.638px;">Chỉ nên nhập thông tin này với những sản phẩm áp dụng VAT riêng. VAT chung hệ thống sẽ tự động áp dụng.</span>
</body></html>
